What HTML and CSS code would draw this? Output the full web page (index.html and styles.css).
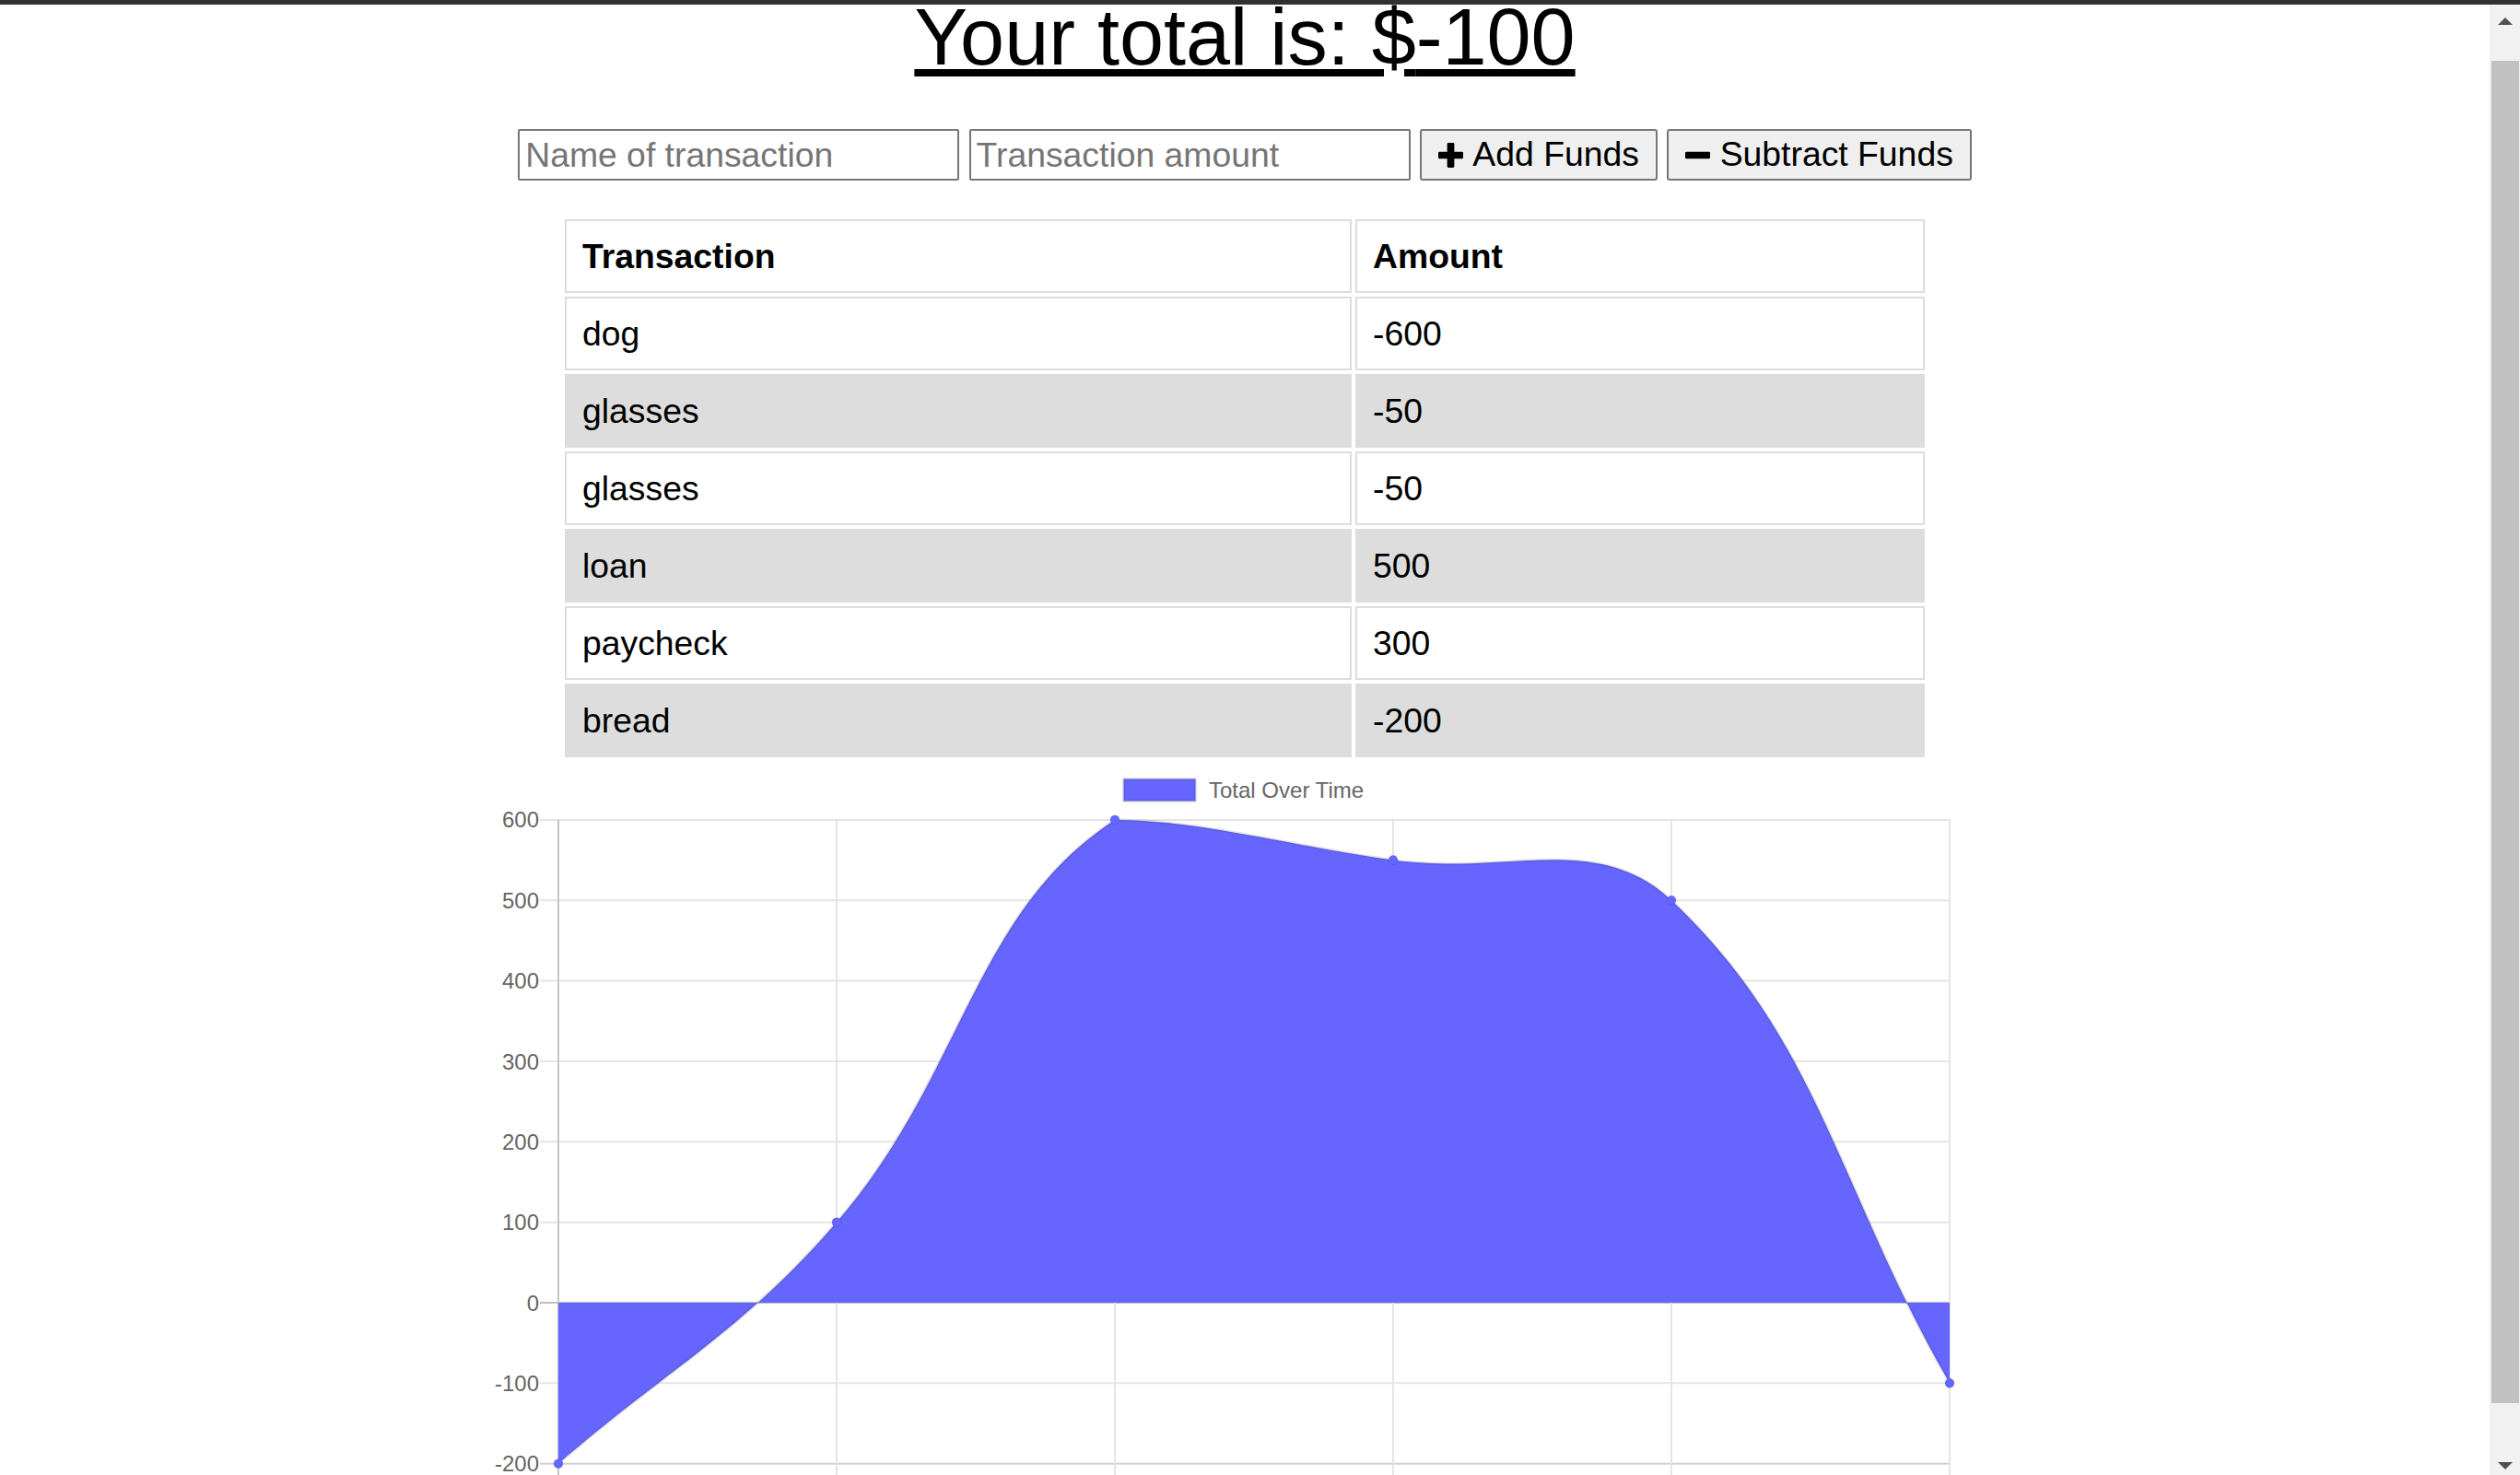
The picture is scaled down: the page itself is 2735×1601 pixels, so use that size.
FILE: index.html
```html
<!DOCTYPE html>
<html lang="en">
<head>
<meta charset="utf-8">
<title>Budget Tracker</title>
<link rel="stylesheet" href="styles.css">
</head>
<body>
<div class="topbar"></div>
<div class="window">
  <main class="page">
    <h1 class="total">Your total is: $<span>-100</span></h1>

    <div class="form">
      <input type="text" class="field" placeholder="Name of transaction">
      <input type="text" class="field" placeholder="Transaction amount">
      <button class="btn" type="button">
        <svg class="icon" viewBox="0 0 28 28" aria-hidden="true"><rect x="10" y="0" width="8" height="28" rx="1.5"/><rect x="0" y="10" width="28" height="8" rx="1.5"/></svg>
        <span>Add Funds</span>
      </button>
      <button class="btn" type="button">
        <svg class="icon" viewBox="0 0 28 28" aria-hidden="true"><rect x="0" y="10" width="28" height="8" rx="1.5"/></svg>
        <span>Subtract Funds</span>
      </button>
    </div>

    <table class="tx">
      <thead>
        <tr><th class="c-name">Transaction</th><th class="c-amt">Amount</th></tr>
      </thead>
      <tbody>
        <tr><td>dog</td><td>-600</td></tr>
        <tr><td>glasses</td><td>-50</td></tr>
        <tr><td>glasses</td><td>-50</td></tr>
        <tr><td>loan</td><td>500</td></tr>
        <tr><td>paycheck</td><td>300</td></tr>
        <tr><td>bread</td><td>-200</td></tr>
      </tbody>
    </table>

    <svg class="chart" width="1702" height="775" viewBox="500 826 1702 775" aria-label="Total Over Time chart">
      <!-- legend -->
      <rect x="1219.5" y="845.5" width="78" height="24" fill="#6666ff" stroke="rgba(0,0,0,0.1)" stroke-width="3"/>
      <text class="lbl" x="1312" y="857" dominant-baseline="central">Total Over Time</text>

      <!-- horizontal grid -->
      <g stroke="#e5e5e5" stroke-width="2">
        <line x1="586" y1="889.9" x2="2117" y2="889.9"/>
        <line x1="586" y1="977.25" x2="2117" y2="977.25"/>
        <line x1="586" y1="1064.6" x2="2117" y2="1064.6"/>
        <line x1="586" y1="1152" x2="2117" y2="1152"/>
        <line x1="586" y1="1239.3" x2="2117" y2="1239.3"/>
        <line x1="586" y1="1326.65" x2="2117" y2="1326.65"/>
        <line x1="586" y1="1501.35" x2="2117" y2="1501.35"/>
      </g>
      <line x1="586" y1="1414" x2="2117" y2="1414" stroke="#c0c0c0" stroke-width="2"/>
      <line x1="586" y1="1588.7" x2="2117" y2="1588.7" stroke="#d0d0d0" stroke-width="2"/>

      <!-- vertical grid -->
      <g stroke="#e5e5e5" stroke-width="2">
        <line x1="908" y1="889.9" x2="908" y2="1610"/>
        <line x1="1210" y1="889.9" x2="1210" y2="1610"/>
        <line x1="1512" y1="889.9" x2="1512" y2="1610"/>
        <line x1="1814" y1="889.9" x2="1814" y2="1610"/>
        <line x1="2116" y1="889.9" x2="2116" y2="1610"/>
      </g>
      <line x1="606" y1="889.9" x2="606" y2="1610" stroke="#c6c6c6" stroke-width="2"/>

      <!-- y labels -->
      <g class="lbl" text-anchor="end" dominant-baseline="central">
        <text x="585" y="889.9">600</text>
        <text x="585" y="977.25">500</text>
        <text x="585" y="1064.6">400</text>
        <text x="585" y="1152">300</text>
        <text x="585" y="1239.3">200</text>
        <text x="585" y="1326.65">100</text>
        <text x="585" y="1414">0</text>
        <text x="585" y="1501.35">-100</text>
        <text x="585" y="1588.7">-200</text>
      </g>

      <!-- area -->
      <path fill="#6666ff" d="M606,1414 L606,1588.7 C726.8,1483.9 804.2,1446.7 908,1326.65 C1045.8,1167 1056.5,989.5 1210,889.9 C1298.1,889.9 1391.2,915.8 1512,933.6 C1632.8,950.8 1733,900.8 1814,977.25 C1974.6,1128.1 1995.2,1291.6 2116,1501.35 L2116,1414 Z"/>
      <path fill="none" stroke="rgba(0,0,0,0.1)" stroke-width="3" d="M606,1588.7 C726.8,1483.9 804.2,1446.7 908,1326.65 C1045.8,1167 1056.5,989.5 1210,889.9 C1298.1,889.9 1391.2,915.8 1512,933.6 C1632.8,950.8 1733,900.8 1814,977.25 C1974.6,1128.1 1995.2,1291.6 2116,1501.35"/>

      <!-- points -->
      <g fill="#6666ff" stroke="rgba(0,0,0,0.1)" stroke-width="1">
        <circle cx="606" cy="1588.7" r="5"/>
        <circle cx="908" cy="1326.65" r="5"/>
        <circle cx="1210" cy="889.9" r="5"/>
        <circle cx="1512" cy="933.6" r="5"/>
        <circle cx="1814" cy="977.25" r="5"/>
        <circle cx="2116" cy="1501.35" r="5"/>
      </g>
    </svg>
  </main>

  <aside class="scrollbar" aria-hidden="true">
    <div class="sb-top"><span class="arrow-up"></span></div>
    <div class="sb-thumb"></div>
    <div class="sb-bottom"><span class="arrow-down"></span></div>
  </aside>
</div>
</body>
</html>
```

FILE: styles.css
```css
html, body {
  margin: 0;
  padding: 0;
}

body {
  height: 1601px;
  overflow: hidden;
  background: #ffffff;
  color: #000000;
  font-family: "Liberation Sans", Arial, sans-serif;
  font-size: 37.33px;
}

.topbar {
  height: 5px;
  background: #303133;
}

.window {
  display: flex;
  height: 1596px;
}

.page {
  flex: 1;
  min-width: 0;
  height: 1596px;
  overflow: hidden;
}

.total {
  margin: 0;
  font-size: 86.4px;
  font-weight: normal;
  line-height: 70px;
  text-align: center;
  text-decoration: underline;
}

.form {
  display: flex;
  justify-content: center;
  gap: 10.4px;
  margin-top: 65px;
  height: 56px;
}

.field {
  box-sizing: border-box;
  width: 479px;
  height: 56px;
  margin: 0;
  padding: 0 6px;
  border: 2px solid #767676;
  border-radius: 2px;
  font-family: "Liberation Sans", Arial, sans-serif;
  font-size: 37.33px;
  color: #000;
  background: #fff;
  outline: none;
}

.field::placeholder {
  color: #757575;
}

.btn {
  box-sizing: border-box;
  display: inline-flex;
  align-items: center;
  gap: 10.4px;
  height: 56px;
  margin: 0;
  padding: 0 18px;
  border: 2px solid #767676;
  border-radius: 3px;
  background: #efefef;
  color: #000;
  font-family: "Liberation Sans", Arial, sans-serif;
  font-size: 37.33px;
  line-height: 1;
}

.icon {
  width: 27px;
  height: 27px;
  fill: #000;
  flex: none;
}

.tx {
  width: 1484px;
  margin: 38px auto 0;
  border-collapse: separate;
  border-spacing: 4px;
  table-layout: fixed;
}

.tx th,
.tx td {
  border: 2px solid #dddddd;
  padding: 17px;
  line-height: 42px;
  font-size: 37.33px;
  text-align: left;
  white-space: nowrap;
}

.tx th {
  font-weight: bold;
}

.tx .c-name {
  width: 816px;
}

.tx .c-amt {
  width: 580px;
}

.tx tbody tr:nth-child(even) td {
  background: #dddddd;
}

.chart {
  display: block;
  margin: 0 auto;
}

.lbl {
  font-family: "Liberation Sans", Arial, sans-serif;
  font-size: 24px;
  fill: #666666;
}

.scrollbar {
  flex: none;
  width: 33px;
  height: 1596px;
  background: #f1f1f1;
  display: flex;
  flex-direction: column;
}

.sb-top {
  height: 61px;
  display: flex;
  justify-content: center;
  align-items: flex-start;
  padding-top: 14px;
  box-sizing: border-box;
}

.sb-thumb {
  height: 1457px;
  margin: 0 1px 0 2px;
  background: #c1c1c1;
}

.sb-bottom {
  flex: 1;
  display: flex;
  justify-content: center;
  align-items: flex-end;
  padding-bottom: 6px;
  box-sizing: border-box;
}

.arrow-up {
  width: 0;
  height: 0;
  border-left: 8px solid transparent;
  border-right: 8px solid transparent;
  border-bottom: 8px solid #505050;
}

.arrow-down {
  width: 0;
  height: 0;
  border-left: 8px solid transparent;
  border-right: 8px solid transparent;
  border-top: 8px solid #505050;
}
```
